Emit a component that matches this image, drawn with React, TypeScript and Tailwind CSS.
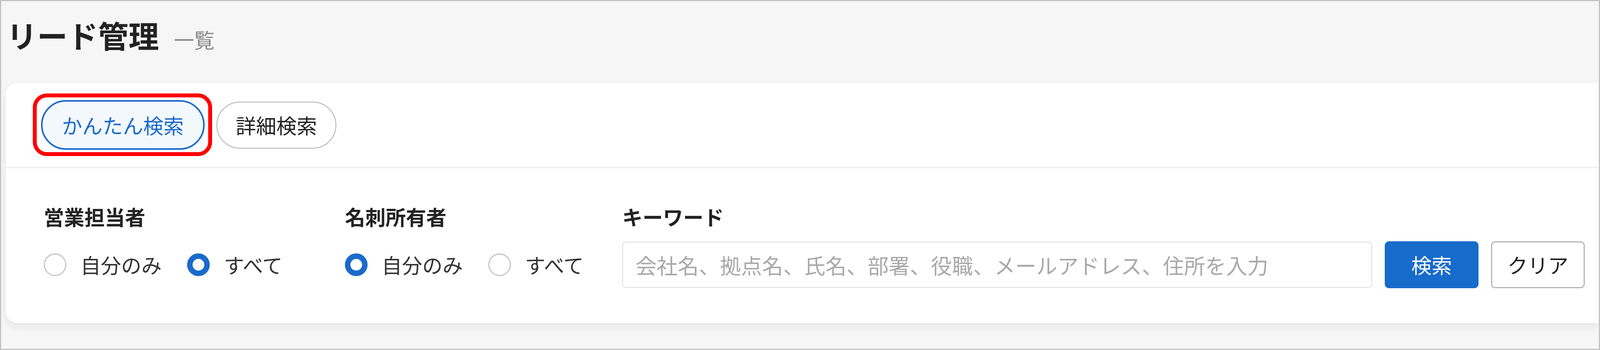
import { useState } from "react";

type Option = { value: string; label: string };

const OWNER_OPTIONS: Option[] = [
  { value: "mine", label: "自分のみ" },
  { value: "all", label: "すべて" },
];

function Radio({ checked }: { checked: boolean }) {
  return checked ? (
    <span className="box-border h-[58px] w-[58px] shrink-0 rounded-full border-[14px] border-[#1a6acb] bg-white" />
  ) : (
    <span className="box-border h-[58px] w-[58px] shrink-0 rounded-full border-[3px] border-[#c6c6c6] bg-white" />
  );
}

function RadioGroup({
  label,
  value,
  onChange,
  className,
}: {
  label: string;
  value: string;
  onChange: (v: string) => void;
  className: string;
}) {
  return (
    <div className={className}>
      <div className="h-[52px] text-[52px] font-bold leading-none text-[#222]">{label}</div>
      <div className="mt-[37px] flex h-[120px] items-center gap-[65px]">
        {OWNER_OPTIONS.map((opt) => (
          <button
            key={opt.value}
            type="button"
            onClick={() => onChange(opt.value)}
            className="flex items-center gap-[36px]"
          >
            <Radio checked={value === opt.value} />
            <span className="text-[52px] leading-none text-[#333]">{opt.label}</span>
          </button>
        ))}
      </div>
    </div>
  );
}

export default function App() {
  const [tab, setTab] = useState<"simple" | "detail">("simple");
  const [sales, setSales] = useState("all");
  const [cardOwner, setCardOwner] = useState("mine");
  const [keyword, setKeyword] = useState("");

  return (
    <div className="box-border h-[895px] w-full overflow-hidden border-[3px] border-[#c4c4c4] bg-[#f6f6f6] font-['Noto_Sans_CJK_JP','Noto_Sans',sans-serif]">
      {/* page header */}
      <div className="flex h-[209px] items-baseline pl-[14px] pt-[47px]">
        <h1 className="text-[78px] font-bold leading-none text-[#222]">リード管理</h1>
        <span className="ml-[38px] text-[52px] leading-none text-[#8a8a8a]">一覧</span>
      </div>

      {/* search card */}
      <div className="ml-[12px] rounded-l-[30px] bg-white shadow-[0_10px_22px_rgba(0,0,0,0.07)]">
        <div className="flex h-[215px] items-center gap-[30px] pl-[90px]">
          <button
            type="button"
            onClick={() => setTab("simple")}
            className={
              tab === "simple"
                ? "relative box-border flex h-[127px] w-[419px] items-center justify-center rounded-full border-[4px] border-[#1a6acb] bg-[#f3f8fd] text-[52px] leading-none text-[#1a6acb]"
                : "relative box-border flex h-[127px] w-[419px] items-center justify-center rounded-full border-2 border-[#b0b0b0] bg-white text-[52px] leading-none text-[#222]"
            }
          >
            かんたん検索
            {/* annotation highlight */}
            <span className="pointer-events-none absolute -top-[21px] -right-[23px] -bottom-[20px] -left-[25px] rounded-[36px] border-[10px] border-[#ff0000]" />
          </button>
          <button
            type="button"
            onClick={() => setTab("detail")}
            className={
              tab === "detail"
                ? "box-border flex h-[120px] w-[307px] items-center justify-center rounded-full border-[4px] border-[#1a6acb] bg-[#f3f8fd] text-[52px] leading-none text-[#1a6acb]"
                : "box-border flex h-[120px] w-[307px] items-center justify-center rounded-full border-2 border-[#b0b0b0] bg-white text-[52px] leading-none text-[#222]"
            }
          >
            詳細検索
          </button>
        </div>

        <div className="flex border-t-[3px] border-[#eeeeee] pb-[89px] pl-[97px] pr-[36px] pt-[98px]">
          <RadioGroup label="営業担当者" value={sales} onChange={setSales} className="w-[771px] shrink-0" />
          <RadioGroup label="名刺所有者" value={cardOwner} onChange={setCardOwner} className="w-[710px] shrink-0" />

          <div className="min-w-0 flex-1">
            <div className="h-[52px] text-[52px] font-bold leading-none text-[#222]">キーワード</div>
            <div className="mt-[37px] flex h-[120px] items-center gap-[32px]">
              <input
                type="text"
                value={keyword}
                onChange={(e) => setKeyword(e.target.value)}
                placeholder="会社名、拠点名、氏名、部署、役職、メールアドレス、住所を入力"
                className="box-border h-[118px] w-0 min-w-0 flex-1 rounded-[10px] border-2 border-[#dcdcdc] bg-white pl-[32px] text-[54px] text-[#333] placeholder:text-[#a9a9a9] focus:outline-none"
              />
              <button
                type="button"
                className="h-[120px] w-[240px] shrink-0 rounded-[11px] bg-[#176bcb] text-[52px] leading-none text-white"
              >
                検索
              </button>
              <button
                type="button"
                onClick={() => setKeyword("")}
                className="box-border h-[120px] w-[240px] shrink-0 rounded-[10px] border-[3px] border-[#b4b4b4] bg-white text-[52px] leading-none text-[#222]"
              >
                クリア
              </button>
            </div>
          </div>
        </div>
      </div>
    </div>
  );
}
